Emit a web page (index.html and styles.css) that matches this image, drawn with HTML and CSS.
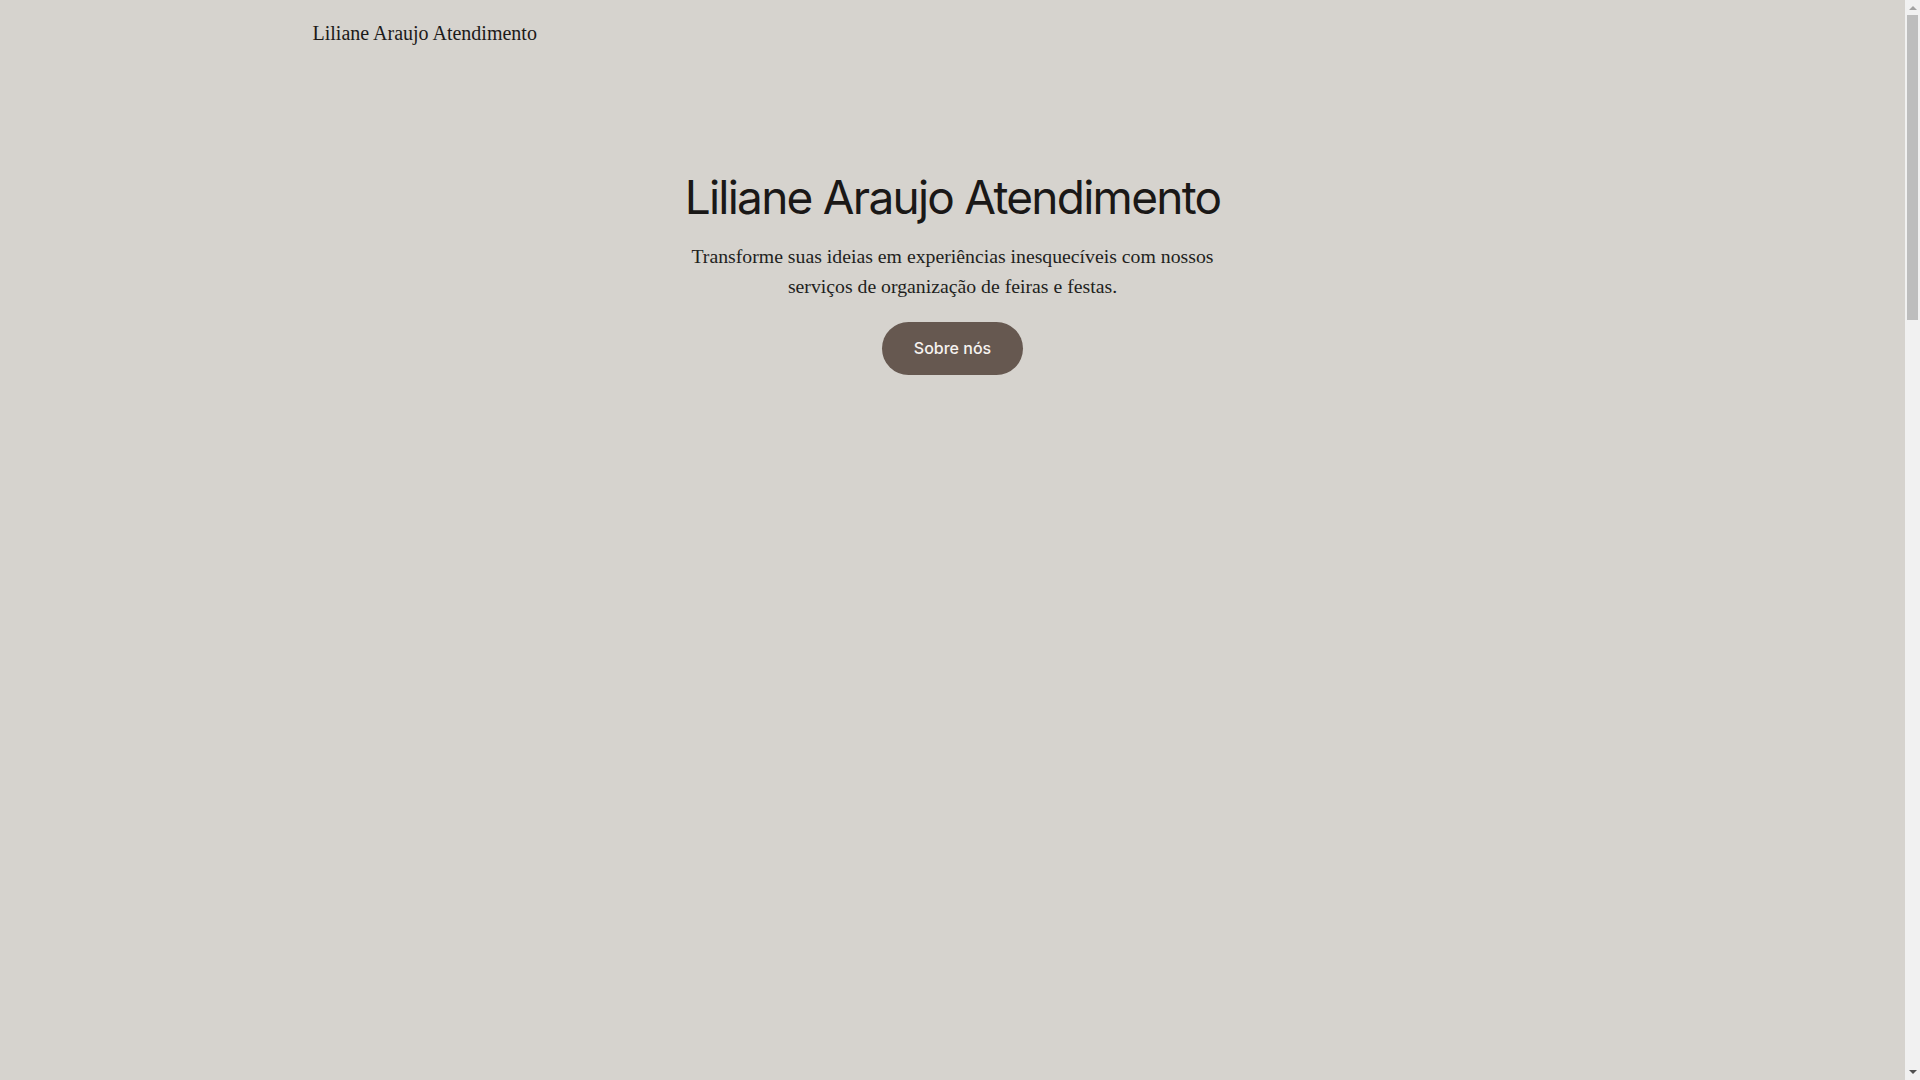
FILE: index.html
```html
<!DOCTYPE html>
<html lang="pt-BR">
<head>
<meta charset="utf-8">
<title>Liliane Araujo Atendimento</title>
<link rel="stylesheet" href="styles.css">
</head>
<body>
<div class="site">
  <header class="site-header">
    <div class="container">
      <a class="brand" href="#">Liliane Araujo Atendimento</a>
    </div>
  </header>
  <main class="page">
    <section class="hero">
      <h1 class="hero-title">Liliane Araujo Atendimento</h1>
      <p class="hero-text">Transforme suas ideias em experiências inesquecíveis com nossos serviços de organização de feiras e festas.</p>
      <a class="btn" href="#sobre">Sobre nós</a>
    </section>
    <section class="filler" id="sobre"></section>
  </main>
</div>
<div class="scrollbar" aria-hidden="true">
  <span class="sb-arrow sb-up"></span>
  <span class="sb-thumb"></span>
  <span class="sb-arrow sb-down"></span>
</div>
</body>
</html>
```

FILE: styles.css
```css
html, body {
  margin: 0;
  padding: 0;
}
body {
  background: #d6d3ce;
  color: #1c1a19;
  font-family: "Liberation Serif", "Times New Roman", serif;
}
.site {
  margin-right: 15px;
}
.container {
  max-width: 1280px;
  margin: 0 auto;
}
.site-header {
  padding: 18px 0;
}
.brand {
  display: block;
  font-size: 20px;
  line-height: 30px;
  color: #1c1a19;
  text-decoration: none;
}
.page {
  min-height: 3600px;
}
.hero {
  display: flex;
  flex-direction: column;
  align-items: center;
  text-align: center;
  padding-top: 102px;
}
.hero-title {
  margin: 0;
  font-family: "Inter", "Noto Sans", sans-serif;
  font-weight: 400;
  font-size: 46px;
  letter-spacing: -0.038em;
  line-height: 58px;
  color: #1a1817;
}
.hero-text {
  margin: 15px 0 0;
  max-width: 540px;
  font-size: 19.75px;
  line-height: 30px;
  color: #221f1d;
}
.btn {
  margin-top: 21px;
  display: inline-block;
  height: 53px;
  line-height: 53px;
  padding: 0 32px;
  border-radius: 27px;
  background: #665850;
  color: #f6f3f0;
  font-family: "Inter", "Noto Sans", sans-serif;
  font-weight: 500;
  font-size: 16px;
  text-decoration: none;
}
.scrollbar {
  position: fixed;
  top: 0;
  right: 0;
  width: 15px;
  height: 100vh;
  background: #f1f1f1;
  display: flex;
  flex-direction: column;
  align-items: center;
}
.sb-arrow {
  flex: none;
  width: 0;
  height: 0;
  border-left: 4px solid transparent;
  border-right: 4px solid transparent;
}
.sb-up {
  margin-top: 6px;
  border-bottom: 4px solid #a3a3a3;
}
.sb-down {
  margin-top: auto;
  margin-bottom: 6px;
  border-top: 4px solid #505050;
}
.sb-thumb {
  flex: none;
  margin-top: 5px;
  width: 11px;
  height: 305px;
  background: #bdbdbd;
}
```
